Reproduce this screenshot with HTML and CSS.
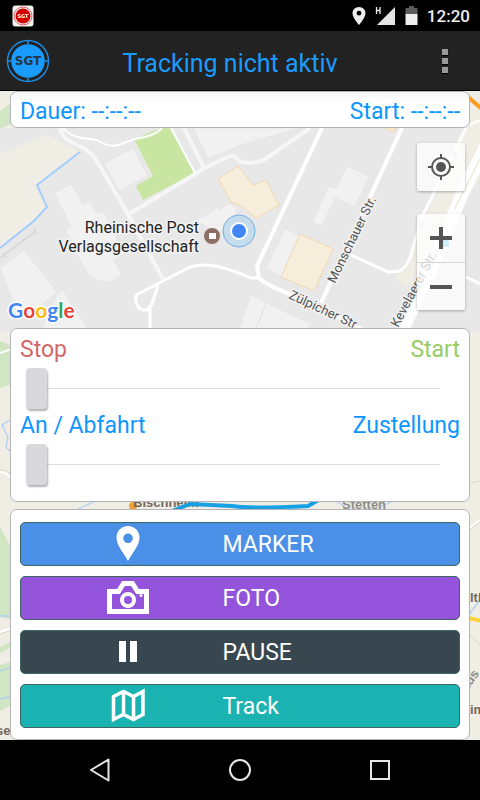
FILE: index.html
```html
<!DOCTYPE html>
<html lang="de">
<head>
  <meta charset="UTF-8" />
  <meta name="viewport" content="width=device-width, initial-scale=1.0"/>
  <title>SGT Tracking</title>
  <link rel="stylesheet" href="styles.css">
</head>
<body>

  <div class="status-bar">
    <svg width="22" height="22" viewBox="0 0 22 22">
      <rect x="0.5" y="0.5" width="21" height="21" rx="3" fill="#f4f1f1"/>
      <circle cx="11" cy="11" r="9" fill="none" stroke="#e06060" stroke-width="1"/>
      <circle cx="11" cy="11" r="7.5" fill="#d40000"/>
      <text x="11" y="13" class="logo-text" font-size="5" fill="#fff">SGT</text>
    </svg>
    <div class="status-icons">
      <svg width="14" height="20" viewBox="0 0 14 20">
        <path fill="#eee" fill-rule="evenodd" d="M7 1C3.4 1 .5 3.8.5 7.3.5 12 7 19 7 19s6.500-7 6.500-11.700C13.500 3.800 10.600 1 7 1zm0 3.800a2.400 2.400 0 1 1 0 4.800 2.400 2.400 0 0 1 0-4.800z"/>
      </svg>
      <svg width="21" height="20" viewBox="0 0 21 20">
        <path fill="#e4e4e4" d="M20 1v18H2z"/>
        <path fill="none" stroke="#eee" stroke-width="1.300" d="M1.500 1v7M5 1v7M1.500 4.500H5"/>
      </svg>
      <svg width="13" height="20" viewBox="0 0 13 20">
        <path fill="#5c5c5c" d="M4 0h5v2h3.500v6H.5V2H4z"/>
        <path fill="#eee" d="M.5 8h12v11H.5z"/>
      </svg>
      <span class="clock">12:20</span>
    </div>
  </div>

  <header class="header">
    <svg class="logo" width="44" height="44" viewBox="0 0 44 44">
      <circle cx="22" cy="22" r="20.500" fill="none" stroke="#1b8fe8" stroke-width="1.400"/>
      <circle cx="22" cy="22" r="16.800" fill="#1a9cff"/>
      <path d="M22 1v4M22 39v4M1 22h4M39 22h4" stroke="#1b8fe8" stroke-width="1.400"/>
      <text x="22" y="26" class="logo-text" font-size="12" fill="#253746">SGT</text>
    </svg>
    <h1>Tracking nicht aktiv</h1>
    <button class="menu-button" aria-label="Menü"><i></i><i></i><i></i></button>
  </header>

  <main>
    <svg class="backdrop" viewBox="0 0 480 649" preserveAspectRatio="xMidYMin slice">
      <rect width="480" height="649" fill="#f0ede5"/>
      <path fill="#d0e6c3" d="M0 20l14-10v22L0 38zM0 250l12 5v38L0 297zM0 436l12 22v70L0 526zM0 556l12-6v6L0 562zM0 574l14-4v42L0 620z"/>
      <path fill="none" stroke="#fff" stroke-width="2" d="M0 262l12-4M0 381q8 0 12 8M0 541l12-4M464 441l16-12"/>
      <path fill="none" stroke="#dcd8d0" d="M0 379q9 0 13 8M0 543l12-4M464 443l16-12M466 540l14 14M462 393l18-3"/>
      <path fill="none" stroke="#acd0f5" stroke-width="1.300" d="M10 329l-8 5 6 12-2 10 6 6M0 525h12M0 580l12-4M0 608l12-3M78 418l24-11M334 409l10 6M468 525l12-16M380 416l16-7"/>
      <path fill="none" stroke="#f99b1c" stroke-width="4" d="M467 5l16 14"/>
      <path fill="none" stroke="#fff" stroke-width="2" d="M470 34l10-5"/>
      <circle cx="133" cy="415" r="4" fill="#f5a12d"/>
      <text x="133" y="416" class="town">Bischheim</text>
      <text x="342" y="418" class="town town-light">Stetten</text>
      <path fill="none" stroke="#18a0e4" stroke-width="4" d="M172 420l18-7 42 2q16 3 76 0l14-8"/>
      <path fill="none" stroke="#fbd13c" stroke-width="4" d="M468 527l14 3"/>
      <text x="470" y="511" class="town">lth</text>
      <text x="-4" y="644" class="town">se</text>
      <text x="470" y="623" class="town">im</text>
      <text x="467" y="601" class="town town-light" transform="rotate(-56 467 601)">aus</text>
    </svg>

    <section class="card times">
      <span>Dauer: --:--:--</span>
      <span>Start: --:--:--</span>
    </section>

    <div class="map">
      <svg class="map-drawing" viewBox="0 0 480 204" preserveAspectRatio="xMidYMid slice">
        <rect width="480" height="204" fill="#e8e8e8"/>
        <path fill="#f0ede5" d="M0 26L47 7l33 16-43 34 10 22-14 14-33 26z"/>
        <!-- buildings -->
        <g fill="#f1f1f1" stroke="#dfdfdf" stroke-width="0.500">
          <path d="M104 35l29-15 15 28-29 15z"/>
          <path d="M54 65l17-9 12 20 8-3 3 10 11 2 19 41-10 6 7 14q-8 8-16 8-14-1-23-18L66 102l5-4z"/>
          <path d="M0 140l24-18 33 42-22 18-18 2z"/>
          <path d="M57 166l6-4 27 42H40z"/>
          <path d="M193 0l15 31 30-13 62-18z"/>
          <path d="M196 92l16-8 4-5 3 3 11-7 6 5v24h-22z"/>
          <path d="M347 38l22 10-14 31-20-9-13 28-10-4 17-36 7 3z"/>
          <path d="M285 101l15 6-19 42-15-9z"/>
          <path d="M251 167l15 8-11 29h-17zM266 175l45 21-4 8h-52z"/>
        </g>
        <path fill="#c8e6a2" d="M134 11l27-11h10l24 45-52 27-7-14 17-10z"/>
        <g fill="#f6eedb" stroke="#f3cf99" stroke-width="0.700">
          <path d="M218 51l20-13 15 19 13-5 13 25-23 13-13-11-12-5z"/>
          <path d="M300 106l33 15-19 42-33-14z"/>
          <path d="M385 0l8 4 3-4z"/>
        </g>
        <path fill="#f0ede5" d="M464 0h16v50l-74 110-11-10 18-25 12-36z"/>
        <!-- roads -->
        <g fill="none" stroke="#f6f6f6" stroke-width="4">
          <path d="M60 0q2 12 20 18 12 6 18 17l31 53 35 65"/>
          <path d="M129 86l76-46 27-13 9 7q12 2 23-2L310 0M184 0l20 40"/>
        </g>
        <path fill="none" stroke="#dadada" stroke-width="2" d="M0 130l36-27M3 125l3 5M34 101l3 5"/>
        <path fill="none" stroke="#a3ccff" stroke-width="2" d="M80 24L37 57l10 22-13 14L0 120"/>
        <g fill="none" stroke="#fff" stroke-width="3" stroke-linejoin="round">
          <path stroke-width="2" d="M63 0q6 8 19 10l15 2q12 8 21 5l17-6q20-3 27-11M171 0l24 45"/>
          <path d="M259 150h-8q-30-13-46-13-10 0-17 3l-25 13-23 12q-6 2-4 9 2 7 7 8h7v22M158 157l-5 16q-2 6-6 9"/>
          <path stroke-width="4" d="M322 0l-65 138 2 12q8 8 41 20l40 20 30 16M402 0l-81 175"/>
          <path d="M351 127l37 17 11-1q6-2 11-13l12-41L466 0M466 149l14 7"/>
          <path stroke-width="13" d="M488 14l-26 52-28 69-34 72"/>
        </g>
        <path fill="none" stroke="#eeead8" stroke-width="1.500" d="M480 31l-26 51"/>
        <path fill="#d6dce6" d="M453 23l4 2-1 6-4-1zM420 93l4 2-1 6-4-1z"/>
        <rect x="441" y="112" width="8" height="7" rx="1" fill="#46b4e4"/>
        <text x="335" y="156" class="street" transform="rotate(-64 335 156)">Monschauer Str.</text>
        <text x="288" y="170" class="street" transform="rotate(25 288 170)">Zülpicher Str.</text>
        <text x="398" y="200" class="street" transform="rotate(-62 398 200)">Kevelaerer Str.</text>
        <text x="199" y="105" class="place">Rheinische Post</text>
        <text x="199" y="124" class="place">Verlagsgesellschaft</text>
        <circle cx="212" cy="108" r="8" fill="#8d6e63"/>
        <rect x="209" y="105" width="7" height="6" fill="#fff"/>
        <circle cx="239" cy="103" r="16" fill="#c5dcec" stroke="#71aee6"/>
        <circle cx="239" cy="103" r="9" fill="#fff"/>
        <circle cx="239" cy="103" r="7" fill="#4285f4"/>
        <text x="8" y="190" class="google"><tspan fill="#4285f4">G</tspan><tspan fill="#ea4335">o</tspan><tspan fill="#fbbc05">o</tspan><tspan fill="#4285f4">g</tspan><tspan fill="#34a853">l</tspan><tspan fill="#ea4335">e</tspan></text>
      </svg>
      <div class="map-controls">
        <button class="map-button" aria-label="Mein Standort">
          <svg width="28" height="28" viewBox="0 0 28 28">
            <circle cx="14" cy="14" r="9" fill="none" stroke="#555" stroke-width="2"/>
            <circle cx="14" cy="14" r="5" fill="#555"/>
            <path d="M14 1v5M14 22v5M1 14h5M22 14h5" stroke="#555" stroke-width="2"/>
          </svg>
        </button>
        <div class="zoom">
          <button class="map-button" aria-label="Vergrößern">
            <svg width="22" height="22" viewBox="0 0 22 22"><path d="M11 0v22M0 11h22" stroke="#555" stroke-width="4"/></svg>
          </button>
          <button class="map-button" aria-label="Verkleinern">
            <svg width="22" height="22" viewBox="0 0 22 22"><path d="M0 11h22" stroke="#555" stroke-width="4"/></svg>
          </button>
        </div>
      </div>
    </div>

    <section class="card sliders">
      <label class="slider-label" for="tracking"><span class="stop">Stop</span><span class="start">Start</span></label>
      <input type="range" id="tracking" min="0" max="1" value="0">
      <label class="slider-label" for="mode"><span>An / Abfahrt</span><span>Zustellung</span></label>
      <input type="range" id="mode" min="0" max="1" value="0">
    </section>

    <section class="card actions">
      <button class="action marker">
        <svg width="44" height="36" viewBox="0 0 44 36">
          <path fill="#fff" fill-rule="evenodd" d="M22 0C15.500 0 10.500 5 10.500 11.500 10.500 20 18 27 22 35c4-8 11.500-15 11.500-23.500C33.500 5 28.500 0 22 0zm0 7.500a4.800 4.800 0 1 1 0 9.600 4.800 4.800 0 0 1 0-9.600z"/>
        </svg>
        <span>MARKER</span>
      </button>
      <button class="action foto">
        <svg width="44" height="36" viewBox="0 0 44 36">
          <path fill="none" stroke="#fff" stroke-width="5" d="M3.500 11.500h9l5-8h9l5 8h9v20h-37z"/>
          <circle cx="22" cy="20" r="6" fill="none" stroke="#fff" stroke-width="4"/>
          <circle cx="35" cy="15.500" r="1.500" fill="#fff"/>
        </svg>
        <span>FOTO</span>
      </button>
      <button class="action pause">
        <svg width="44" height="36" viewBox="0 0 44 36">
          <path fill="#fff" d="M13 7h7v21h-7zM24 7h7v21h-7z"/>
        </svg>
        <span>PAUSE</span>
      </button>
      <button class="action track">
        <svg width="44" height="36" viewBox="0 0 44 36">
          <path fill="none" stroke="#fff" stroke-width="3.500" d="M7.500 8.500l10-5 10 5 9.500-5v23l-9.500 5-10-5-10 5zM17.500 3.500v23M27.500 8.500v23"/>
        </svg>
        <span>Track</span>
      </button>
    </section>
  </main>

  <nav class="nav-bar">
    <button aria-label="Zurück">
      <svg width="28" height="28" viewBox="0 0 28 28"><path d="M22.500 3.500v21L5 14z" fill="none" stroke="#e6e6e6" stroke-width="2" stroke-linejoin="round"/></svg>
    </button>
    <button aria-label="Startseite">
      <svg width="28" height="28" viewBox="0 0 28 28"><circle cx="14" cy="14" r="10" fill="none" stroke="#e6e6e6" stroke-width="2"/></svg>
    </button>
    <button aria-label="Übersicht">
      <svg width="28" height="28" viewBox="0 0 28 28"><path d="M5 5h18v18H5z" fill="none" stroke="#e6e6e6" stroke-width="2"/></svg>
    </button>
  </nav>

</body>
</html>
```
FILE: styles.css
```css
* {
  box-sizing: border-box;
}
body {
  font-family: Roboto, sans-serif;
  font-size: 23px;
  color: #0d96ff;
  background: #000;
  margin: 0;
  min-height: 100vh;
  display: flex;
  flex-direction: column;
}
button {
  font-family: inherit;
  border: none;
  background: none;
  padding: 0;
  cursor: pointer;
}
svg {
  display: block;
}
.status-bar {
  height: 31px;
  padding: 0 10px 0 12px;
  display: flex;
  align-items: center;
  justify-content: space-between;
}
.status-icons {
  display: flex;
  align-items: center;
  gap: 9px;
}
.clock {
  color: #eee;
  font-size: 17px;
  font-weight: 500;
}
.logo-text {
  font-family: "DejaVu Sans", sans-serif;
  font-weight: 700;
  text-anchor: middle;
}
.header {
  height: 60px;
  padding-left: 6px;
  background: #222;
  border-bottom: 1px solid #000;
  display: flex;
  align-items: center;
}
.header h1 {
  flex: 1;
  margin: 0;
  padding-top: 6px;
  font-size: 25px;
  font-weight: 400;
  text-align: center;
  color: #1a9cff;
}
.menu-button {
  width: 70px;
  height: 48px;
  display: flex;
  flex-direction: column;
  align-items: center;
  justify-content: center;
  gap: 3px;
}
.menu-button i {
  width: 6px;
  height: 6px;
  background: #999;
  box-shadow: 0 1px 1px #000;
}
main {
  flex: 1;
  position: relative;
  display: flex;
  flex-direction: column;
  overflow: hidden;
}
.backdrop {
  position: absolute;
  top: 0;
  left: 0;
  width: 100%;
  height: 100%;
}
.card {
  position: relative;
  margin: 0 10px;
  background: #fff;
  border: 1px solid #b4b4b8;
  border-radius: 7px;
}
.times {
  height: 37px;
  padding: 3px 9px 0;
  display: flex;
  align-items: center;
  justify-content: space-between;
  background: linear-gradient(#f4f4f4, #fff 10px);
}
.map {
  position: relative;
  height: 204px;
  margin-bottom: -4px;
}
.map-drawing {
  width: 100%;
  height: 100%;
}
.town {
  font: 700 13px "Liberation Sans", sans-serif;
  fill: #73685c;
}
.town-light {
  fill: #8d8d87;
}
.street,
.place {
  font-size: 13px;
  fill: #555;
  stroke: #f2f2f2;
  stroke-width: 3px;
  paint-order: stroke;
}
.place {
  font-size: 16px;
  fill: #222;
  text-anchor: end;
}
.google {
  font: 700 21px Lato, sans-serif;
  stroke: #fff;
  stroke-width: 3px;
  paint-order: stroke;
}
.map-controls {
  position: absolute;
  top: 15px;
  right: 15px;
  display: flex;
  flex-direction: column;
  gap: 23px;
}
.map-button {
  width: 48px;
  height: 48px;
  display: flex;
  align-items: center;
  justify-content: center;
}
.map-controls > .map-button,
.zoom {
  background: rgba(255, 255, 255, 0.75);
  border-radius: 2px;
  box-shadow: 0 1px 3px rgba(0, 0, 0, 0.3);
}
.zoom .map-button + .map-button {
  border-top: 1px solid #d8d8d8;
}
.sliders {
  padding: 7px 9px 13px;
}
.slider-label {
  height: 28px;
  padding-bottom: 2px;
  display: flex;
  align-items: center;
  justify-content: space-between;
}
.stop {
  color: #d16868;
}
.start {
  color: #96cc68;
}
input[type="range"] {
  -webkit-appearance: none;
  appearance: none;
  display: block;
  width: calc(100% - 26px);
  height: 48px;
  margin: 0 20px 0 6px;
  background: linear-gradient(#ddd, #ddd) center / 100% 1px no-repeat;
}
input[type="range"]::-webkit-slider-thumb {
  -webkit-appearance: none;
  width: 21px;
  height: 41px;
  border-radius: 4px;
  background: #d8d8dd;
  box-shadow: 1px 2px 2px rgba(0, 0, 0, 0.3);
}
.actions {
  margin-top: 7px;
  padding: 12px 9px 11px;
  display: flex;
  flex-direction: column;
  gap: 10px;
}
.action {
  height: 44px;
  border: 1px solid #3d6862;
  border-radius: 5px;
  color: #fff;
  font-size: 23px;
  text-align: left;
  display: grid;
  grid-template-columns: 85px 1fr 54%;
  align-items: center;
}
.action span {
  grid-column: 3;
}
.action svg {
  grid-column: 2;
}
.marker {
  background: #4a90e6;
}
.foto {
  background: #9354db;
}
.pause {
  background: #38474f;
}
.track {
  background: #1bb3b1;
}
.nav-bar {
  height: 60px;
  display: flex;
  align-items: center;
  justify-content: center;
  gap: 92px;
}
.nav-bar button {
  width: 48px;
  height: 48px;
  display: flex;
  align-items: center;
  justify-content: center;
}
```
